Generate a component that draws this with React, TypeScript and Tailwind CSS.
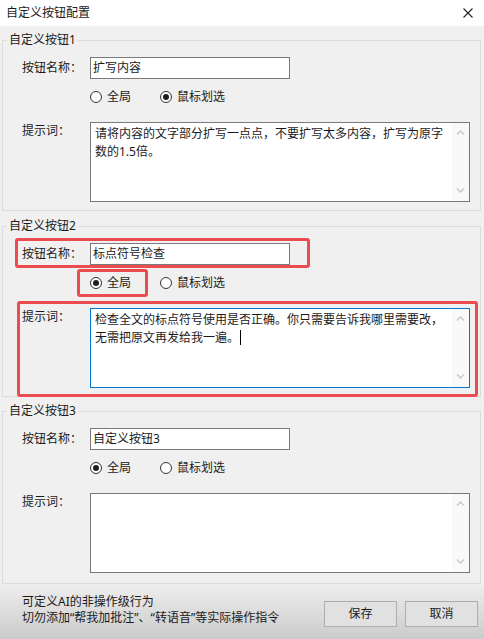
import type { ReactNode } from "react";

const FONT = "font-['Noto_Sans','Noto_Sans_CJK_SC',sans-serif]";

function Radio({ label, checked, wide }: { label: string; checked?: boolean; wide?: boolean }) {
    return (
        <span className={`flex items-center gap-[5px] ${wide ? "w-[70px]" : ""}`}>
            <span className="flex size-[12px] items-center justify-center rounded-full border border-[#333333] bg-white">
                {checked && <span className="size-[6px] rounded-full bg-[#1f1f1f]" />}
            </span>
            <span>{label}</span>
        </span>
    );
}

function ScrollBar() {
    return (
        <div className="flex w-[17px] flex-col items-center justify-between bg-[#f9f9f9] pt-[7px] pb-[8px]">
            <svg width="9" height="5" viewBox="0 0 9 5">
                <path d="M1 4.5 4.5 1 8 4.5" fill="none" stroke="#c6c6c6" strokeWidth="1.3" />
            </svg>
            <svg width="9" height="5" viewBox="0 0 9 5">
                <path d="M1 0.5 4.5 4 8 0.5" fill="none" stroke="#c6c6c6" strokeWidth="1.3" />
            </svg>
        </div>
    );
}

function Group({
    title,
    name,
    global,
    focused,
    lines,
    caret,
    className,
    pb,
}: {
    title: string;
    name: string;
    global: boolean;
    focused?: boolean;
    lines: string[];
    caret?: boolean;
    className: string;
    pb: string;
}) {
    return (
        <fieldset className={`ml-[2px] mr-[3px] border border-[#dcdcdc] ${className}`}>
            <legend className="ml-[4px] px-[2px] leading-[16px]">{title}</legend>
            <div className={`pl-[19px] pt-[9px] ${pb}`}>
                <div className="flex items-center">
                    <span className="w-[68px] leading-[16px]">按钮名称：</span>
                    <div className="flex h-[22px] w-[200px] items-center border border-[#7a7a7a] bg-white pl-[2px]">
                        {name}
                    </div>
                </div>
                <div className="mt-[8px] flex h-[20px] items-center pl-[68px]">
                    <Radio label="全局" checked={global} wide />
                    <Radio label="鼠标划选" checked={!global} />
                </div>
                <div className="mt-[15px] flex items-start">
                    <span className="w-[68px] pt-[1px] leading-[16px]">提示词：</span>
                    <div
                        className={`flex h-[80px] w-[380px] border bg-white ${
                            focused ? "border-[#0078d7]" : "border-[#7a7a7a]"
                        }`}
                    >
                        <div className="flex-1 whitespace-nowrap pl-[4px] pt-[2px] leading-[18px]">
                            {lines.map((l, i) => (
                                <div key={i}>
                                    {l}
                                    {caret && i === lines.length - 1 && (
                                        <span className="ml-[1px] inline-block h-[15px] w-[1px] bg-black align-[-3px]" />
                                    )}
                                </div>
                            ))}
                        </div>
                        <ScrollBar />
                    </div>
                </div>
            </div>
        </fieldset>
    );
}

function Mark({ className }: { className: string }): ReactNode {
    return <div className={`pointer-events-none absolute rounded-[3px] border-[3px] border-[#ec4b4f] ${className}`} />;
}

export default function App() {
    return (
        <div
            className={`relative flex h-[639px] w-[484px] flex-col overflow-hidden bg-[#f0f0f0] text-[12px] text-[#1b1b1b] ${FONT}`}
        >
            <div className="flex h-[26px] shrink-0 items-center justify-between bg-white pl-[6px] pr-[11px]">
                <span className="leading-[16px]">自定义按钮配置</span>
                <svg width="10" height="10" viewBox="0 0 10 10">
                    <path d="M0.5 0.5 9.5 9.5M9.5 0.5 0.5 9.5" stroke="#222" strokeWidth="1.1" />
                </svg>
            </div>

            <div className="flex flex-col">
                <Group
                    title="自定义按钮1"
                    name="扩写内容"
                    global={false}
                    lines={["请将内容的文字部分扩写一点点，不要扩写太多内容，扩写为原字", "数的1.5倍。"]}
                    className="mt-[6px]"
                    pb="pb-[8px]"
                />
                <Group
                    title="自定义按钮2"
                    name="标点符号检查"
                    global
                    focused
                    caret
                    lines={["检查全文的标点符号使用是否正确。你只需要告诉我哪里需要改，", "无需把原文再发给我一遍。"]}
                    className="mt-[7px]"
                    pb="pb-[8px]"
                />
                <Group
                    title="自定义按钮3"
                    name="自定义按钮3"
                    global
                    lines={[]}
                    className="mt-[6px]"
                    pb="pb-[10px]"
                />
            </div>

            <div className="flex flex-1 items-start justify-between bg-linear-to-b from-[#eeeeee] to-[#cbcbcb] pl-[22px] pr-[6px]">
                <div className="pt-[10px] leading-[16px]">
                    <div>可定义AI的非操作级行为</div>
                    <div>切勿添加“帮我加批注”、“转语音”等实际操作指令</div>
                </div>
                <div className="flex gap-[8px] pt-[17px]">
                    <button className="h-[26px] w-[73px] border border-[#adadad] bg-[#e1e1e1]">保存</button>
                    <button className="h-[26px] w-[73px] border border-[#adadad] bg-[#e1e1e1]">取消</button>
                </div>
            </div>

            <Mark className="left-[15px] top-[238px] h-[30px] w-[295px]" />
            <Mark className="left-[77px] top-[269px] h-[28px] w-[71px]" />
            <Mark className="left-[17px] top-[301px] h-[96px] w-[461px]" />
        </div>
    );
}
